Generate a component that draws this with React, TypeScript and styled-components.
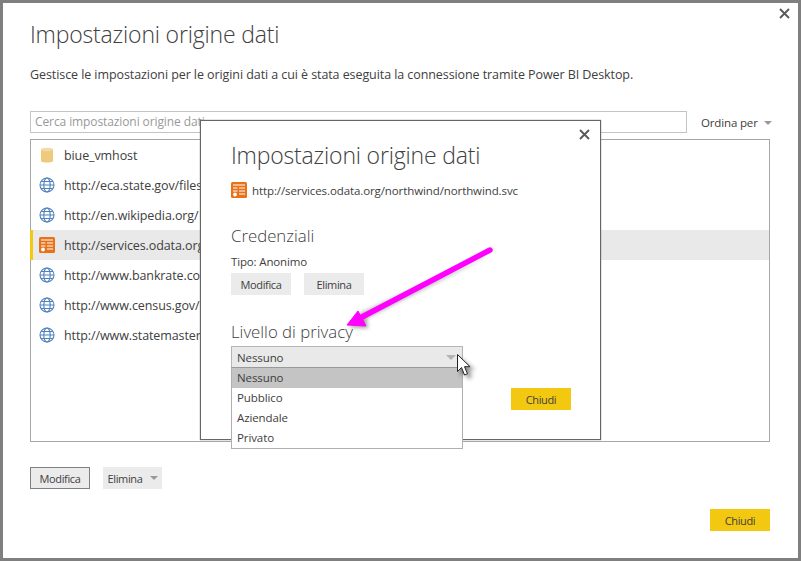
import styled, { createGlobalStyle } from "styled-components";

const GlobalStyle = createGlobalStyle`
    html, body {
        margin: 0;
        padding: 0;
        background: #fff;
    }
    * {
        box-sizing: border-box;
    }
`;

const sources = [
    { name: "biue_vmhost", kind: "db" },
    { name: "http://eca.state.gov/files", kind: "web" },
    { name: "http://en.wikipedia.org/", kind: "web" },
    { name: "http://services.odata.org", kind: "feed", selected: true },
    { name: "http://www.bankrate.com", kind: "web" },
    { name: "http://www.census.gov/", kind: "web" },
    { name: "http://www.statemaster.", kind: "web" },
];

const privacyLevels = ["Nessuno", "Pubblico", "Aziendale", "Privato"];

function DbIcon() {
    return (
        <svg width="16" height="18" viewBox="0 0 16 18">
            <path d="M2 3.5C2 2 14 2 14 3.5V15c0 2-12 2-12 0z" fill="#eeca7f" />
            <ellipse cx="8" cy="3.5" rx="6" ry="1.7" fill="#f3d9a2" />
        </svg>
    );
}

function GlobeIcon() {
    return (
        <svg width="16" height="16" viewBox="0 0 16 16" fill="none" stroke="#4f81bd" strokeWidth="1.1">
            <circle cx="8" cy="8" r="7" />
            <ellipse cx="8" cy="8" rx="3.2" ry="7" />
            <path d="M1 8h14M2 4.5h12M2 11.5h12" />
        </svg>
    );
}

function FeedIcon() {
    return (
        <svg width="16" height="16" viewBox="0 0 16 16">
            <rect width="16" height="16" rx="1.5" fill="#e8711a" />
            <path d="M2 3h12M8 6h6M8 9h6M8 12h6M2 6h4.500M2 9h4.500" stroke="#fff" strokeWidth="1.1" />
            <circle cx="4" cy="12.500" r="1.900" fill="#fff" />
        </svg>
    );
}

function CloseIcon() {
    return (
        <svg width="11" height="11" viewBox="0 0 11 11">
            <path d="M1 1l9 9M10 1l-9 9" stroke="#5a5a5a" strokeWidth="1.9" />
        </svg>
    );
}

function SourceIcon({ kind }: { kind: string }) {
    if (kind === "db") return <DbIcon />;
    if (kind === "feed") return <FeedIcon />;
    return <GlobeIcon />;
}

export default function App() {
    return (
        <Frame>
            <GlobalStyle />
            <CloseSpot>
                <CloseIcon />
            </CloseSpot>
            <Title>Impostazioni origine dati</Title>
            <Description>
                Gestisce le impostazioni per le origini dati a cui è stata eseguita la connessione tramite Power BI Desktop.
            </Description>
            <SearchRow>
                <SearchBox>Cerca impostazioni origine dati</SearchBox>
                <SortLabel>
                    Ordina per <Caret />
                </SortLabel>
            </SearchRow>
            <SourceList>
                {sources.map((s) => (
                    <SourceRow key={s.name} $selected={s.selected}>
                        <IconSlot>
                            <SourceIcon kind={s.kind} />
                        </IconSlot>
                        {s.name}
                    </SourceRow>
                ))}
            </SourceList>
            <ActionRow>
                <FocusButton>Modifica</FocusButton>
                <SplitButton>
                    Elimina <Caret />
                </SplitButton>
            </ActionRow>
            <Footer>
                <PrimaryButton>Chiudi</PrimaryButton>
            </Footer>

            <Dialog>
                <DialogClose>
                    <CloseIcon />
                </DialogClose>
                <DialogTitle>Impostazioni origine dati</DialogTitle>
                <UrlRow>
                    <FeedIcon />
                    http://services.odata.org/northwind/northwind.svc
                </UrlRow>
                <SectionTitle>Credenziali</SectionTitle>
                <TypeLine>Tipo: Anonimo</TypeLine>
                <CredentialButtons>
                    <GrayButton>Modifica</GrayButton>
                    <GrayButton>Elimina</GrayButton>
                </CredentialButtons>
                <PrivacyTitle>Livello di privacy</PrivacyTitle>
                <SelectWrap>
                    <SelectBox>
                        Nessuno
                        <SelectCaret />
                    </SelectBox>
                    <OptionList>
                        {privacyLevels.map((p, i) => (
                            <Option key={p} $active={i === 0}>
                                {p}
                            </Option>
                        ))}
                    </OptionList>
                </SelectWrap>
                <DialogFooter>
                    <PrimaryButton>Chiudi</PrimaryButton>
                </DialogFooter>
            </Dialog>

            <Annotation width="801" height="561" viewBox="0 0 801 561">
                <defs>
                    <filter id="soft" x="-20%" y="-20%" width="140%" height="140%">
                        <feGaussianBlur stdDeviation="2" />
                    </filter>
                </defs>
                <path d="M493 253L366 318l2 10-19-1 11-13z" fill="#444" opacity="0.55" filter="url(#soft)" />
                <path d="M490 250L362 317" stroke="#ff00ff" strokeWidth="5.500" strokeLinecap="round" />
                <path d="M347 325l11-14 8 15z" fill="#ff00ff" stroke="#ff00ff" strokeWidth="1" strokeLinejoin="round" />
                <path d="M460 358v18l5-4 3 7 4-2-3-7h6z" fill="#333" opacity="0.55" filter="url(#soft)" />
                <path d="M457.500 354.500v17l4-4 3 7.500 3-1.300-3-7h5.500z" fill="#fff" stroke="#222" strokeWidth="1" />
            </Annotation>
        </Frame>
    );
}

const Frame = styled.div`
    position: relative;
    width: 801px;
    height: 561px;
    overflow: hidden;
    background: #fff;
    border: 3px solid #7f7f7f;
    padding: 0 28px 0 27px;
    color: #404040;
    font-family: "Open Sans", "Liberation Sans", sans-serif;
    font-size: 12px;
`;

const CloseSpot = styled.div`
    position: absolute;
    top: 5px;
    right: 8px;
    line-height: 0;
`;

const Title = styled.h1`
    margin: 0;
    padding-top: 15px;
    height: 48px;
    font-size: 23px;
    line-height: 32px;
    font-weight: 300;
    color: #404040;
    letter-spacing: -0.18px;
`;

const DialogTitle = styled(Title)`
    padding-top: 18px;
    height: 51px;
`;

const Description = styled.p`
    margin: 15px 0 0;
    height: 18px;
    line-height: 18px;
    font-size: 12.500px;
    letter-spacing: -0.08px;
`;

const SearchRow = styled.div`
    display: flex;
    align-items: center;
    margin-top: 27px;
    height: 22px;
`;

const SearchBox = styled.div`
    flex: none;
    width: 657px;
    height: 22px;
    border: 1px solid #c4c4c4;
    padding-left: 4px;
    line-height: 19px;
    color: #999;
    letter-spacing: -0.1px;
`;

const Caret = styled.i`
    display: inline-block;
    width: 0;
    height: 0;
    margin-left: 3px;
    vertical-align: 2px;
    border-left: 4px solid transparent;
    border-right: 4px solid transparent;
    border-top: 4px solid #999;
`;

const SortLabel = styled.div`
    margin-left: 14px;
    white-space: nowrap;
    font-size: 11.500px;
    letter-spacing: -0.15px;
`;

const SourceList = styled.div`
    margin-top: 6px;
    width: 740px;
    height: 303px;
    border: 1px solid #a6a6a6;
    padding-top: 0;
`;

const SourceRow = styled.div<{ $selected?: boolean }>`
    display: flex;
    align-items: center;
    height: 30px;
    white-space: nowrap;
    padding-left: 6px;
    border-left: 3px solid ${(p) => (p.$selected ? "#f2c811" : "transparent")};
    margin-left: -1px;
    background: ${(p) => (p.$selected ? "#e9e9e9" : "transparent")};
    font-size: 12.500px;
    letter-spacing: -0.1px;
`;

const IconSlot = styled.span`
    display: flex;
    justify-content: center;
    width: 16px;
    margin-right: 9px;
`;

const ActionRow = styled.div`
    display: flex;
    align-items: center;
    gap: 13px;
    margin-top: 25px;
`;

const BaseButton = styled.div`
    display: flex;
    align-items: center;
    justify-content: center;
    height: 22px;
    width: 60px;
    font-size: 11px;
    letter-spacing: -0.35px;
    color: #404040;
    background: #ebebeb;
`;

const FocusButton = styled(BaseButton)`
    border: 1px solid #7f7f7f;
`;

const SplitButton = styled(BaseButton)`
    width: 59px;
    gap: 4px;
`;

const GrayButton = styled(BaseButton)``;

const PrimaryButton = styled(BaseButton)`
    background: #f2c811;
`;

const Footer = styled.div`
    display: flex;
    justify-content: flex-end;
    margin-top: 20px;
`;

const Dialog = styled.div`
    position: absolute;
    left: 197px;
    top: 117px;
    width: 401px;
    height: 320px;
    background: #fff;
    border: 1px solid #666;
    padding: 0 29px 0 30px;
    box-shadow: 0 0 1px #666;
`;

const DialogClose = styled.div`
    position: absolute;
    top: 8px;
    right: 10px;
    line-height: 0;
`;

const UrlRow = styled.div`
    display: flex;
    align-items: center;
    gap: 5px;
    height: 18px;
    margin-top: 9px;
    white-space: nowrap;
    font-size: 11.500px;
    letter-spacing: -0.1px;
`;

const SectionTitle = styled.h2`
    margin: 25px 0 0;
    height: 24px;
    font-size: 16.800px;
    line-height: 24px;
    font-weight: 300;
    color: #404040;
`;

const TypeLine = styled.div`
    margin-top: 6px;
    height: 16px;
    line-height: 16px;
    font-size: 11.500px;
    letter-spacing: -0.15px;
`;

const CredentialButtons = styled.div`
    display: flex;
    gap: 13px;
    margin-top: 3px;
`;

const PrivacyTitle = styled(SectionTitle)`
    margin-top: 25px;
`;

const SelectWrap = styled.div`
    position: relative;
    width: 232px;
    margin-top: 2px;
`;

const SelectBox = styled.div`
    position: relative;
    height: 21px;
    padding-left: 5px;
    line-height: 21px;
    background: #e9e9e9;
    border: 1px solid #b5b5b5;
    border-bottom: 0;
    font-size: 11.500px;
    letter-spacing: -0.1px;
`;

const SelectCaret = styled.i`
    position: absolute;
    right: 6px;
    top: 8px;
    width: 0;
    height: 0;
    border-left: 5px solid transparent;
    border-right: 5px solid transparent;
    border-top: 5px solid #b4b4b4;
`;

const OptionList = styled.div`
    position: absolute;
    z-index: 2;
    left: 0;
    right: 0;
    top: 21px;
    background: #fff;
    border: 1px solid #b0b0b0;
    border-top-color: #999;
`;

const Option = styled.div<{ $active?: boolean }>`
    height: 20px;
    line-height: 20px;
    padding-left: 5px;
    background: ${(p) => (p.$active ? "#c4c4c4" : "transparent")};
    font-size: 11.500px;
    letter-spacing: -0.1px;
`;

const DialogFooter = styled.div`
    display: flex;
    justify-content: flex-end;
    margin-top: 21px;
`;

const Annotation = styled.svg`
    position: absolute;
    left: -3px;
    top: -3px;
    z-index: 5;
    pointer-events: none;
`;
